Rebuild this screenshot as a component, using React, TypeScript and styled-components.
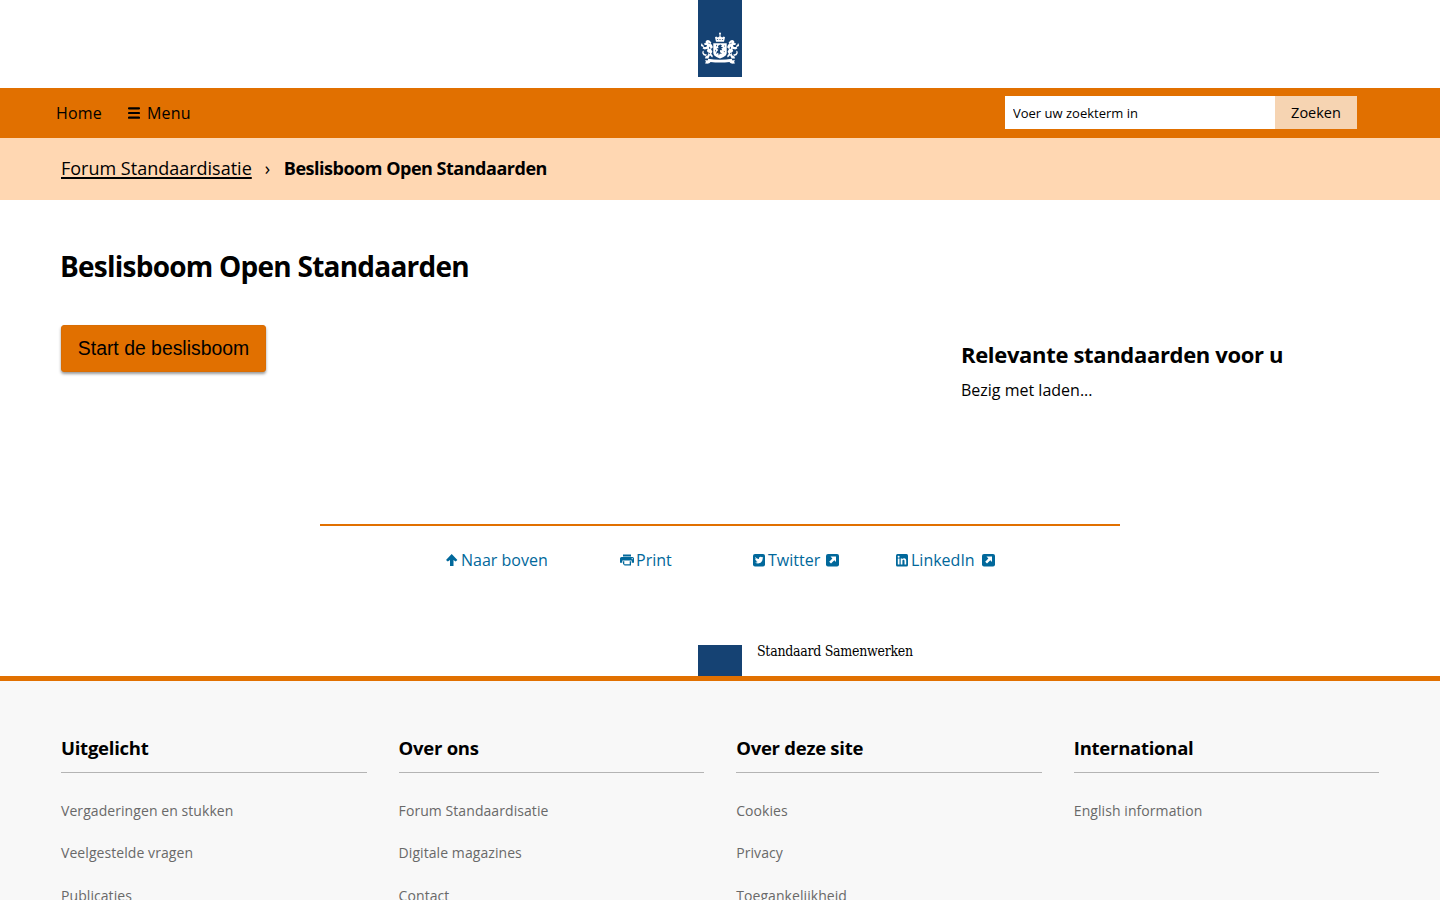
import React from "react";
import styled, { createGlobalStyle } from "styled-components";

const ORANGE = "#e17000";
const NAVY = "#154273";
const LINK = "#01689b";

const GlobalStyle = createGlobalStyle`
  *, *::before, *::after { box-sizing: border-box; }
  html { overflow: hidden; }
  body {
    margin: 0;
    height: 900px;
    overflow: hidden;
    background: #fff;
    color: #000;
    font-family: "Open Sans", "Noto Sans", sans-serif;
    font-size: 16px;
  }
  ul, h1, h2, h3, p { margin: 0; padding: 0; list-style: none; }
`;

const Page = styled.div`
  display: flex;
  flex-direction: column;
  height: 900px;
  overflow: hidden;
`;

const LogoHeader = styled.header`
  display: flex;
  justify-content: center;
  height: 88px;
`;

const LogoRibbon = styled.div`
  display: flex;
  align-items: flex-end;
  justify-content: center;
  width: 44px;
  height: 77px;
  padding-bottom: 12px;
  background: ${NAVY};
`;

const NavBar = styled.nav`
  display: flex;
  align-items: center;
  justify-content: space-between;
  height: 50px;
  padding: 0 83px 0 56px;
  background: ${ORANGE};
`;

const NavLinks = styled.div`
  display: flex;
  gap: 26px;
`;

const NavLink = styled.a`
  display: flex;
  align-items: center;
  gap: 7px;
  line-height: 24px;
  letter-spacing: 0.2px;
`;

const SearchForm = styled.form`
  display: flex;
  height: 33px;
  margin-bottom: 1px;
`;

const SearchInput = styled.input`
  width: 270px;
  padding: 0 8px;
  border: 0;
  border-radius: 0;
  background: #fff;
  font: 13px "Open Sans", sans-serif;
  &::placeholder { color: #000; opacity: 1; }
`;

const SearchButton = styled.button`
  width: 82px;
  padding: 0;
  border: 0;
  background: #f6d4b2;
  color: #000;
  font: 14.5px "Open Sans", sans-serif;
`;

const Breadcrumb = styled.div`
  display: flex;
  align-items: center;
  height: 62px;
  padding: 0 61px 2px;
  background: #ffd7b2;
  font-size: 18px;
  line-height: 24px;
`;

const CrumbLink = styled.a`
  text-decoration: underline;
  text-decoration-thickness: 2px;
  text-underline-offset: 2px;
`;

const CrumbSeparator = styled.span`
  width: 32px;
  padding-left: 13px;
`;

const CrumbCurrent = styled.strong`
  font-size: 18px;
  letter-spacing: -0.48px;
`;

const Main = styled.main`
  display: grid;
  grid-template-columns: 900px 1fr;
  grid-template-rows: 125px 199px;
  padding: 0 61px;
  height: 324px;
`;

const Title = styled.h1`
  grid-column: 1 / -1;
  margin-left: -1px;
  padding-top: 46px;
  font-size: 28px;
  line-height: 40px;
  letter-spacing: -0.76px;
`;

const StartButton = styled.button`
  justify-self: start;
  width: 205px;
  height: 47px;
  padding: 0;
  border: 1px solid #d96d03;
  border-radius: 3px;
  background: ${ORANGE};
  box-shadow: 0 2px 3px rgba(0, 0, 0, 0.4);
  color: #000;
  font: 19.4px "Liberation Sans", Arial, sans-serif;
`;

const Aside = styled.aside`
  padding-top: 14px;
`;

const AsideTitle = styled.h2`
  font-size: 22px;
  line-height: 30px;
  letter-spacing: -0.33px;
`;

const AsideText = styled.p`
  margin-top: 9px;
  line-height: 24px;
`;

const ShareList = styled.div`
  display: grid;
  grid-template-columns: 175px 132px 143px 100px;
  align-self: center;
  width: 800px;
  height: 121px;
  padding: 22px 0 0 125px;
  border-top: 2px solid ${ORANGE};
`;

const ShareLink = styled.a`
  display: flex;
  align-items: center;
  height: 24px;
  color: ${LINK};
  white-space: nowrap;
  svg { flex: none; }
`;

const ShareLabel = styled.span<{ $gap?: number }>`
  margin: 0 ${(p) => p.$gap ?? 0}px 0 2px;
`;

const Payoff = styled.div`
  display: flex;
  flex: none;
  height: 31px;
  padding-left: 698px;
`;

const PayoffBlock = styled.div`
  width: 44px;
  background: ${NAVY};
`;

const PayoffText = styled.p`
  padding-left: 15px;
  font: 14px/13px "DejaVu Serif Condensed", "DejaVu Serif", serif;
  letter-spacing: -0.27px;
`;

const Footer = styled.footer`
  display: grid;
  flex: none;
  grid-template-columns: repeat(4, 305.5px);
  column-gap: 32.1px;
  height: 224px;
  padding: 52px 61px 0;
  overflow: hidden;
  border-top: 5px solid ${ORANGE};
  background: #f8f8f8;
`;

const FooterTitle = styled.h3`
  height: 40px;
  border-bottom: 1px solid #b4b4b4;
  font-size: 18.5px;
  line-height: 30px;
  letter-spacing: -0.26px;
`;

const FooterLinks = styled.ul`
  padding-top: 17px;
`;

const FooterLink = styled.li`
  height: 42.4px;
  color: #696969;
  font-size: 14px;
  line-height: 42px;
  letter-spacing: 0.07px;
`;

const CoatOfArms = () => (
  <svg width="40" height="33" viewBox="0 0 40 33" fill="#fff">
    <circle cx="20" cy="1.5" r="1" />
    <path d="M19.5 2h1v2.500h-1zM15 5.200l1.200-.8 1.600 1.200L20 4.100l2.200 1.500 1.600-1.200 1.200.8-1 4.600h-8z" />
    <path d="M16.900 7h1.200v.8h-1.200zM19.400 7h1.200v.8h-1.200zM21.900 7h1.200v.8h-1.200z" fill={NAVY} />
    <path d="M13.300 11.300h13.400v9.500c0 3.100-3.400 4.600-6.700 5.800-3.300-1.200-6.700-2.700-6.700-5.800z" />
    <path d="M16 12.500l1.200 1-.8 1.200zM20.200 12.500l1.800.7-1.100 1.200 2.300 1.400-2 .8 1.200 1.700-2.200-.3-.2 1.900 2 2-2.100-.4-1.100 2-.6-2.800-2.200 1.400.8-2.600 1.500-1.400-1.800-1.800 2.100-.1-.7-2.300zM24 13.300l1 .6-.6 1.200zM15 17.500l1 1-.7 1.500zM23.800 18.800l1 .5-.8 1.200z" fill={NAVY} />
    <g id="lion">
      <path d="M9.800 8.700c-2.500-1.600-4.800.3-4.100 2.200l-1.900.6 1 1.400 2.200.2-.7 1.900-3 .1-.7 1.400 2.100 1.100 3-.8-.9 2.300 1.600 1.600-.8 2.700-2.200 1.100-.3 2h3.300l1.500-3.200 2.300 2.100.7-1.400-1.700-2.300 1.200-1.900-1.400-2.700 1.900-1.800-1.100-2.700-1.300-.5.900-1.400z" />
      <path d="M3.200 15.200l-1.900-1.400-.2-2 1-.4.6 1.500 1.500 1zM6 24l-2.500-.8-1.300-2.100.5-2 1-.4-.1 2 1 1.200 2.300.5zM1 13.300h1.500v1H1z" />
      <path d="M8 10.700l1.700.2-.5 1zM9 14.500l1.700 1.700-1.500.8zM8.500 20.300l1.600.9-1.200 1.200z" fill={NAVY} />
    </g>
    <use href="#lion" transform="matrix(-1 0 0 1 40 0)" />
    <path d="M8 26.800c7.500 1.200 16.500 1.200 24 0v1.500l3-.1-.9 1.600.9 1.700c-3 .4-4.600.1-5.500-1.500-6 .7-13 .7-19 0C9.600 31.600 8 31.900 5 31.500l.9-1.700-.9-1.600 3 .1z" />
  </svg>
);

const MenuIcon = () => (
  <svg width="12" height="12" viewBox="0 0 12 12">
    <path d="M1 1.300h10M1 6h10M1 10.700h10" stroke="#000" strokeWidth="2.200" strokeLinecap="round" />
  </svg>
);

const ArrowUpIcon = () => (
  <svg width="14" height="14" viewBox="0 0 14 14" fill={LINK}>
    <path d="M6.700.9L12.400 7 10.600 8.500 8.500 6.900V13H5V6.900L2.800 8.500 1 7z" />
  </svg>
);

const PrintIcon = () => (
  <svg width="14" height="14" viewBox="0 0 14 14" fill={LINK}>
    <path d="M3 1.500h8v2H3zM1.500 4h11Q14 4 14 5.500V9.800h-2.300V7.500H2.300V9.800H0V5.500Q0 4 1.500 4zM3 8.200h1.300v3h5.400v-3H11v4.300H4.600L3 11z" />
    <circle cx="12.200" cy="5.700" r=".6" fill="#fff" />
  </svg>
);

const TwitterIcon = () => (
  <svg width="14" height="14" viewBox="0 0 14 14">
    <rect x="1" y="1" width="12" height="12.500" rx="2" fill={LINK} />
    <path d="M3.200 4c1 1.200 2.300 1.900 3.800 2-.3-1.500.7-2.300 1.700-2.300.6 0 1 .2 1.300.6l1.100-.4-.5 1 .8-.2-.8.9c.1 3-2 4.900-4.500 4.900-1.200 0-2.200-.3-3-.9 1 .1 1.900-.2 2.600-.7-.8 0-1.400-.5-1.600-1.200h.7c-.9-.2-1.500-.9-1.500-1.800l.7.2c-.8-.6-1-1.400-.8-2.100z" fill="#fff" />
  </svg>
);

const LinkedInIcon = () => (
  <svg width="14" height="14" viewBox="0 0 14 14">
    <rect x="1" y="1" width="12" height="12.500" rx="1.500" fill={LINK} />
    <path d="M2.800 5.400h1.700V11.500H2.800zM5.700 5.400h1.600v.8c.4-.6 1-.9 1.800-.9 1.500 0 2.100 1 2.100 2.500v3.700H9.500V8.200c0-.9-.3-1.400-1-1.400s-1.100.5-1.100 1.400v3.300H5.700z" fill="#fff" />
    <circle cx="3.650" cy="3.700" r="1" fill="#fff" />
  </svg>
);

const ExternalIcon = () => (
  <svg width="13" height="13" viewBox="0 0 13 13">
    <rect width="13" height="12.500" rx="2" fill={LINK} />
    <path d="M4.500 2.500H10V8L8.300 6.300 5 9.600 3.200 7.800l3.200-3.300z" fill="#fff" />
  </svg>
);

const footerColumns = [
  { title: "Uitgelicht", links: ["Vergaderingen en stukken", "Veelgestelde vragen", "Publicaties"] },
  { title: "Over ons", links: ["Forum Standaardisatie", "Digitale magazines", "Contact"] },
  { title: "Over deze site", links: ["Cookies", "Privacy", "Toegankelijkheid"] },
  { title: "International", links: ["English information"] },
];

export default function App() {
  return (
    <Page>
      <GlobalStyle />
      <LogoHeader>
        <LogoRibbon><CoatOfArms /></LogoRibbon>
      </LogoHeader>
      <NavBar>
        <NavLinks>
          <NavLink>Home</NavLink>
          <NavLink><MenuIcon />Menu</NavLink>
        </NavLinks>
        <SearchForm>
          <SearchInput placeholder="Voer uw zoekterm in" />
          <SearchButton type="button">Zoeken</SearchButton>
        </SearchForm>
      </NavBar>
      <Breadcrumb>
        <CrumbLink>Forum Standaardisatie</CrumbLink>
        <CrumbSeparator>›</CrumbSeparator>
        <CrumbCurrent>Beslisboom Open Standaarden</CrumbCurrent>
      </Breadcrumb>
      <Main>
        <Title>Beslisboom Open Standaarden</Title>
        <StartButton>Start de beslisboom</StartButton>
        <Aside>
          <AsideTitle>Relevante standaarden voor u</AsideTitle>
          <AsideText>Bezig met laden...</AsideText>
        </Aside>
      </Main>
      <ShareList>
        <ShareLink><ArrowUpIcon /><ShareLabel>Naar boven</ShareLabel></ShareLink>
        <ShareLink><PrintIcon /><ShareLabel>Print</ShareLabel></ShareLink>
        <ShareLink><TwitterIcon /><ShareLabel $gap={6}>Twitter</ShareLabel><ExternalIcon /></ShareLink>
        <ShareLink><LinkedInIcon /><ShareLabel $gap={7}>LinkedIn</ShareLabel><ExternalIcon /></ShareLink>
      </ShareList>
      <Payoff>
        <PayoffBlock />
        <PayoffText>Standaard Samenwerken</PayoffText>
      </Payoff>
      <Footer>
        {footerColumns.map((column) => (
          <section key={column.title}>
            <FooterTitle>{column.title}</FooterTitle>
            <FooterLinks>
              {column.links.map((link) => <FooterLink key={link}>{link}</FooterLink>)}
            </FooterLinks>
          </section>
        ))}
      </Footer>
    </Page>
  );
}
